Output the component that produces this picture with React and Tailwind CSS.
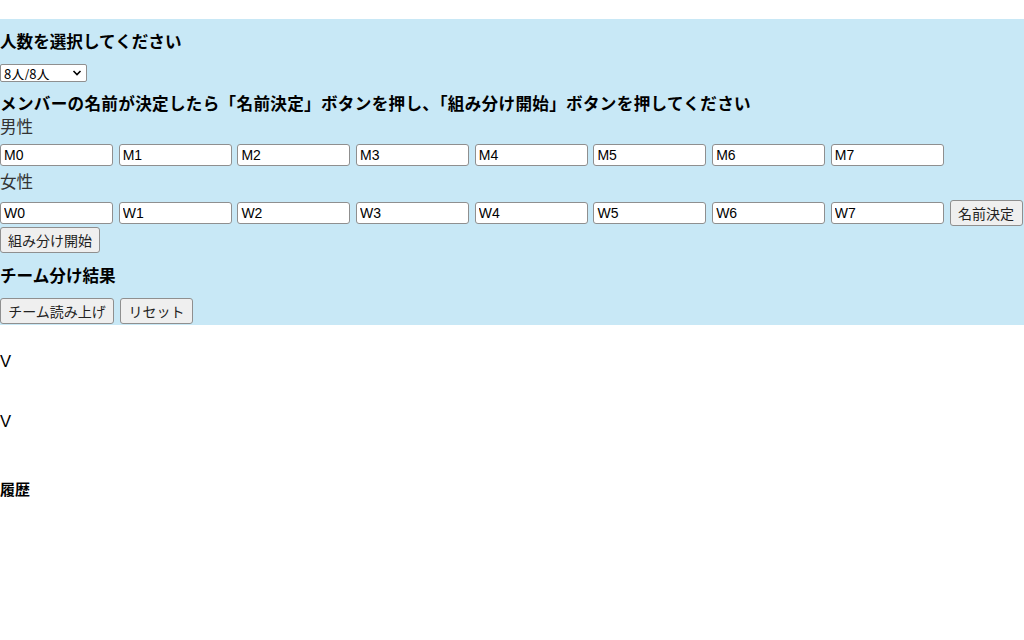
const men = ["M0", "M1", "M2", "M3", "M4", "M5", "M6", "M7"];
const women = ["W0", "W1", "W2", "W3", "W4", "W5", "W6", "W7"];

const jp = "font-['Noto_Sans_CJK_JP','Noto_Sans',sans-serif]";
const btn =
  "h-[26px] px-[6px] bg-[#efefef] border border-[#8f8f8f] rounded-[3px] text-[14px] leading-none text-[#222] font-['Noto_Sans_CJK_JP',sans-serif]";

function NameInput({ value }) {
  return (
    <input
      defaultValue={value}
      className="w-[113px] h-[22px] px-[3px] bg-white border border-[#8f8f8f] rounded-[3px] text-[14px] text-black font-['Liberation_Sans',Arial,sans-serif] outline-none"
    />
  );
}

export default function App() {
  return (
    <div className={`min-h-[640px] bg-white pt-[19px] text-black ${jp}`}>
      <section className="bg-[#c8e8f6] pt-[11px] pb-[1px]">
        <h3 className="h-[22px] text-[16.6px] font-bold leading-[22px]">人数を選択してください</h3>

        <div className="mt-[12px] relative w-[87px] h-[18px]">
          <select className="block appearance-none w-full h-full bg-white border border-[#8f8f8f] rounded-[2px] text-[13px] leading-none pl-[3px] font-['Noto_Sans_CJK_JP',sans-serif]">
            <option>8人/8人</option>
          </select>
          <svg
            className="absolute right-[5px] top-[5px] w-[10px] h-[8px] pointer-events-none"
            viewBox="0 0 10 8"
            fill="none"
            stroke="#000"
            strokeWidth="1.6"
          >
            <path d="M1.5 2 L5 5.5 L8.5 2" />
          </svg>
        </div>

        <h3 className="mt-[10px] h-[22px] text-[16.6px] font-bold leading-[22px] whitespace-nowrap tracking-[0.3px]">
          メンバーの名前が決定したら「名前決定」ボタンを押し、「組み分け開始」ボタンを押してください
        </h3>

        <p className="mt-[1px] h-[22px] text-[16.6px] leading-[22px] text-[#333]">男性</p>
        <div className="mt-[7px] flex gap-[5.7px]">
          {men.map((m) => (
            <NameInput key={m} value={m} />
          ))}
        </div>

        <p className="mt-[4px] h-[22px] text-[16.6px] leading-[22px] text-[#333]">女性</p>
        <div className="mt-[8px] flex items-center gap-[5.7px]">
          {women.map((w) => (
            <NameInput key={w} value={w} />
          ))}
          <button className={`${btn} w-[73px]`}>名前決定</button>
        </div>

        <button className={`${btn} mt-[1px] w-[100px] block`}>組み分け開始</button>

        <h3 className="mt-[11px] h-[22px] text-[16.6px] font-bold leading-[22px]">チーム分け結果</h3>

        <div className="mt-[12px] flex gap-[6px]">
          <button className={`${btn} w-[114px]`}>チーム読み上げ</button>
          <button className={`${btn} w-[73px]`}>リセット</button>
        </div>
      </section>

      <p className="mt-[26px] h-[22px] text-[16.6px] leading-[22px] font-['Liberation_Sans',sans-serif]">V</p>
      <p className="mt-[38px] h-[22px] text-[16.6px] leading-[22px] font-['Liberation_Sans',sans-serif]">V</p>
      <h3 className="mt-[45px] h-[22px] text-[15px] font-bold leading-[22px]">履歴</h3>
    </div>
  );
}
